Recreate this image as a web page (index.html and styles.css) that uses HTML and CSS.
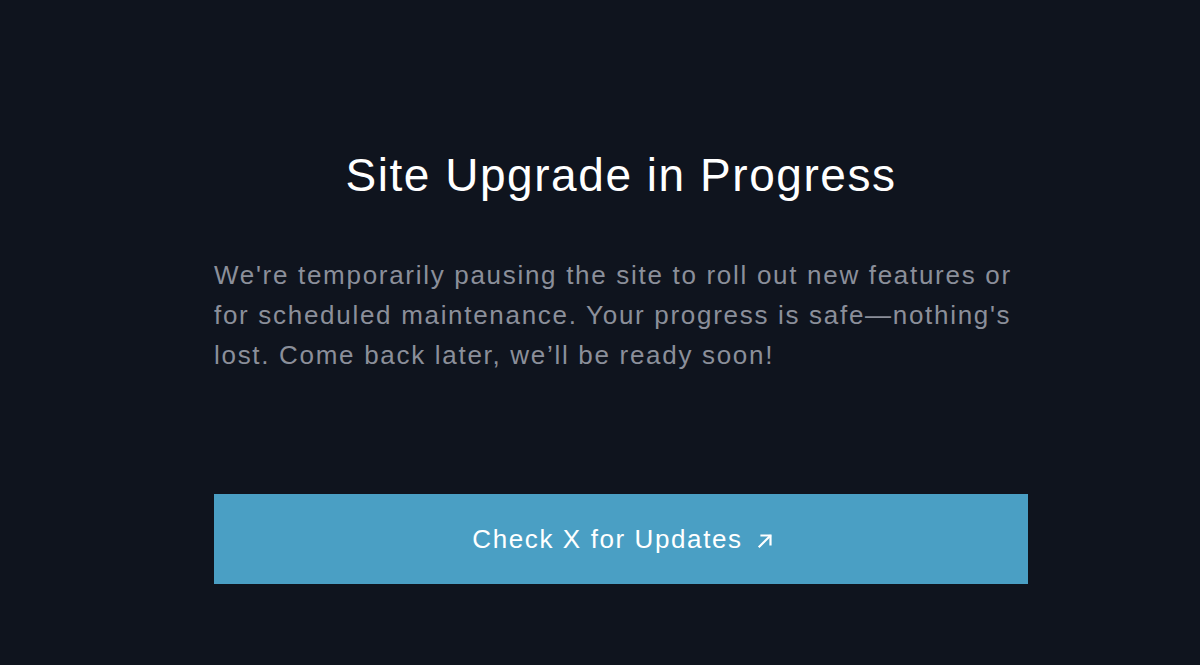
FILE: index.html
```html
<!DOCTYPE html>
<html lang="en">
<head>
	<meta charset="UTF-8">
	<title>Site Upgrade in Progress</title>
	<link rel="stylesheet" href="styles.css">
</head>
<body>
	<div class="wrap">
		<h1 class="title">Site Upgrade in Progress</h1>
		<p class="text">We're temporarily pausing the site to roll out new features or for scheduled maintenance. Your progress is safe—nothing's lost. Come back later, we’ll be ready soon!</p>
		<a class="btn" href="#">
			<span>Check X for Updates</span>
			<svg class="arrow" width="16" height="16" viewBox="0 0 16 16" fill="none" stroke="#fff" stroke-width="2.2" stroke-linecap="square">
				<path d="M2.5 13.5 L13 3"/>
				<path d="M4.5 2.5 H13.5 V11.5"/>
			</svg>
		</a>
	</div>
</body>
</html>
```

FILE: styles.css
```css
*{
	margin: 0;
	padding: 0;
	box-sizing: border-box;
}
body{
	background: #0f141e;
	font-family: "Liberation Sans", Arial, sans-serif;
	width: 1200px;
	height: 665px;
	overflow: hidden;
}
.wrap{
	width: 814px;
	margin-left: 214px;
	padding-top: 147px;
	display: flex;
	flex-direction: column;
}
.title{
	color: #fff;
	font-size: 46px;
	font-weight: normal;
	text-align: center;
	letter-spacing: 1.55px;
	line-height: 56px;
}
.text{
	margin-top: 52px;
	color: #8b8f9a;
	font-size: 26px;
	line-height: 40px;
	letter-spacing: 1.7px;
}
.btn{
	margin-top: 119px;
	height: 90px;
	background: #4a9fc4;
	color: #fff;
	text-decoration: none;
	font-size: 26px;
	letter-spacing: 1.6px;
	display: flex;
	justify-content: center;
	align-items: center;
	gap: 14px;
}
.arrow{
	margin-top: 4px;
	margin-right: -3px;
}
```
